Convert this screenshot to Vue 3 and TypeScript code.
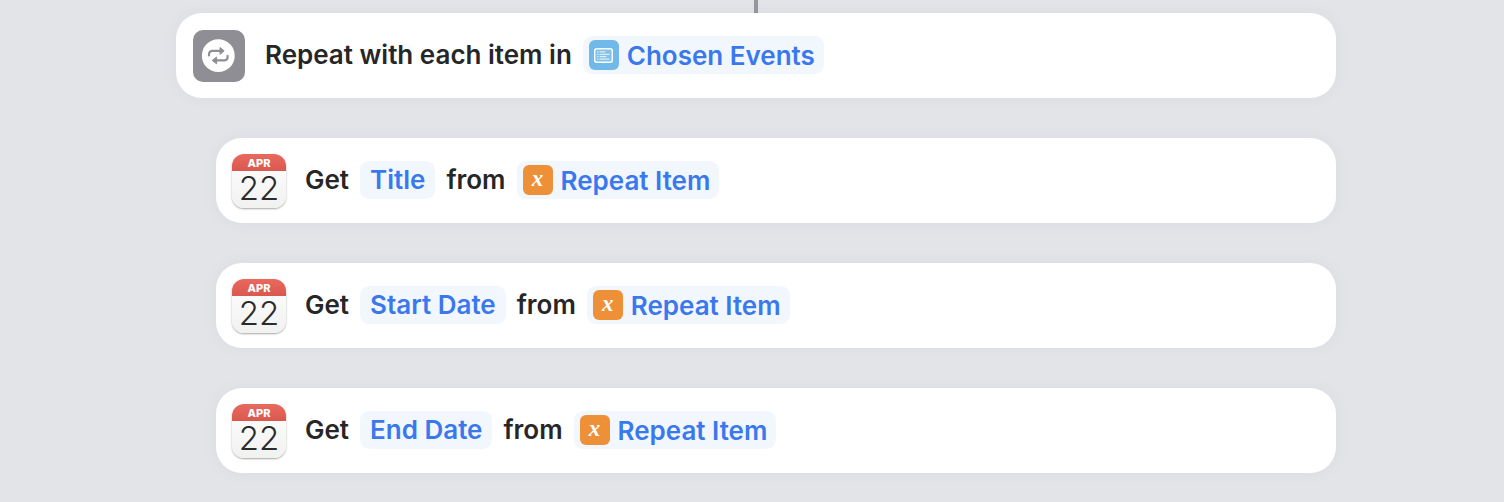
<script setup lang="ts">
interface PropertyAction {
  id: number
  property: string
}

const actions: PropertyAction[] = [
  { id: 1, property: 'Title' },
  { id: 2, property: 'Start Date' },
  { id: 3, property: 'End Date' },
]
</script>

<template>
  <main class="editor">
    <div class="connector"></div>
    <section class="card">
      <svg class="app-icon" viewBox="0 0 52 52" aria-hidden="true">
        <rect width="52" height="52" rx="10" fill="#8f8e94" />
        <circle cx="25.3" cy="25.7" r="16.4" fill="#fff" />
        <g fill="none" stroke="#8f8e94" stroke-width="2.2" stroke-linecap="round">
          <path d="M16 25.4v-.9q0-3.6 3.6-3.6h8" />
          <path d="M34.6 25.9v.9q0 3.6-3.6 3.6h-8" />
        </g>
        <g fill="#8f8e94" stroke="#8f8e94" stroke-width="1" stroke-linejoin="round">
          <path d="M27 17.5v6.8l4.2-3.4z" />
          <path d="M23.6 27v6.8l-4.4-3.4z" />
        </g>
      </svg>
      <p class="sentence">
        <span>Repeat with each item in</span>
        <button type="button" class="token variable">
          <svg class="token-icon" viewBox="0 0 30 30" aria-hidden="true">
            <rect width="30" height="30" rx="6" fill="#70b9e8" />
            <rect x="5.7" y="8.7" width="17.6" height="13.6" rx="2" fill="#82c2ea" stroke="#fff" stroke-width="1.4" />
            <g stroke="#fff" stroke-width="1" stroke-linecap="round" opacity=".9">
              <path d="M8.6 11.9h.5M11 11.9h5M8.6 14.3h.5M11 14.3h9.2M8.6 16.7h.5M11 16.7h6M8.6 19.1h.5M11 19.1h9.2" />
            </g>
          </svg>
          <span class="label">Chosen Events</span>
        </button>
      </p>
    </section>

    <section v-for="action in actions" :key="action.id" class="card nested">
      <div class="calendar">
        <span class="month">APR</span>
        <span class="day">22</span>
      </div>
      <p class="sentence">
        <span>Get</span>
        <button type="button" class="token">{{ action.property }}</button>
        <span>from</span>
        <button type="button" class="token variable">
          <span class="token-icon x">x</span>
          <span class="label">Repeat Item</span>
        </button>
      </p>
    </section>
  </main>
</template>

<style>
body {
  margin: 0;
  background: #e3e4e8;
}
</style>

<style scoped>
.editor {
  box-sizing: border-box;
  display: flex;
  flex-direction: column;
  gap: 40px;
  padding: 0 168px 29px 176px;
  font-family: Inter, "Liberation Sans", sans-serif;
  background: #e3e4e8;
}

.connector {
  align-self: center;
  width: 4px;
  height: 13px;
  margin-bottom: -40px;
  background: #98979d;
}

.card {
  box-sizing: border-box;
  display: flex;
  align-items: flex-start;
  gap: 20px;
  min-height: 85px;
  padding: 17px 17px 15px;
  border-radius: 26px;
  background: #fff;
  box-shadow: 0 0 18px rgba(60, 60, 80, 0.04);
}

.nested {
  margin-left: 40px;
  padding: 16px 16px 15px;
  gap: 19px;
}

.app-icon {
  flex: none;
  width: 52px;
  height: 52px;
}

.sentence {
  display: flex;
  flex-wrap: wrap;
  align-items: center;
  gap: 11px;
  margin: 6px 0 0;
  font-size: 26px;
  font-weight: 600;
  line-height: 38px;
  color: #262628;
}

.nested .sentence {
  margin-top: 7px;
}

.token {
  display: inline-flex;
  align-items: center;
  height: 38px;
  padding: 0 10px;
  border: 0;
  border-radius: 9px;
  background: #f2f7fe;
  color: #3a78ee;
  font: inherit;
  white-space: nowrap;
}

.variable {
  gap: 8px;
  padding: 0 9px 0 6px;
}

.label {
  padding-top: 2px;
}

.token-icon {
  flex: none;
  width: 30px;
  height: 30px;
}

.x {
  border-radius: 6px;
  background: #ed9038;
  color: #fff;
  font-family: "Liberation Serif", serif;
  font-size: 23px;
  font-style: italic;
  font-weight: 700;
  line-height: 27px;
  text-align: center;
}

.calendar {
  flex: none;
  display: flex;
  flex-direction: column;
  width: 54px;
  height: 54px;
  overflow: hidden;
  border-radius: 12px;
  background: linear-gradient(#fff, #f1f1f0);
  box-shadow: 0 1px 2px rgba(0, 0, 0, 0.35);
  text-align: center;
}

.month {
  height: 17px;
  background: linear-gradient(#e9695f, #d9584f);
  color: #fff;
  font-size: 11px;
  font-weight: 800;
  line-height: 19px;
}

.day {
  color: #2b2b2b;
  font-size: 33px;
  font-weight: 300;
  line-height: 34px;
}
</style>
